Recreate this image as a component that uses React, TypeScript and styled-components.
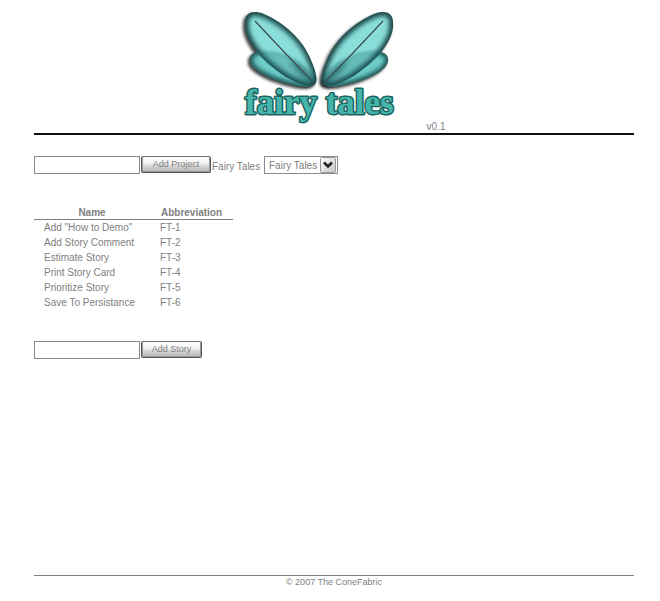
import React from "react";
import styled, { createGlobalStyle } from "styled-components";

const GlobalStyle = createGlobalStyle`
  *, *::before, *::after { box-sizing: border-box; }
  body {
    margin: 0;
    background: #fff;
    color: #808080;
    font: 10px/15px "Liberation Sans", Arial, sans-serif;
  }
`;

const Page = styled.div`
  display: flex;
  flex-direction: column;
  min-height: 100vh;
  padding: 8px 26px 12px 34px;
`;

const Header = styled.header`
  display: flex;
  justify-content: center;
  align-items: flex-end;
  gap: 4px;
  border-bottom: 2px solid #111;
`;

const Logo = styled.svg`
  display: block;
  width: 200px;
  height: 125px;
`;

const Wordmark = styled.text`
  font-family: "Liberation Serif", "Times New Roman", serif;
  font-weight: 700;
  font-size: 35px;
  fill: #45b5ab;
  stroke: #1d655f;
  stroke-width: 3px;
  stroke-linejoin: round;
  paint-order: stroke;
`;

const Version = styled.span`
  line-height: 13px;
`;

const Main = styled.main`
  flex: 1;
  padding-top: 21px;
`;

const Bar = styled.form`
  display: flex;
  align-items: flex-start;
  gap: 1px;
`;

const TextBox = styled.input`
  width: 106px;
  height: 18px;
  padding: 1px 3px;
  border: 1px solid #8a8a8a;
  background: #fff;
  color: inherit;
  font: inherit;
`;

const PushButton = styled.button<{ $wide?: boolean }>`
  min-width: ${(p) => (p.$wide ? 70 : 61)}px;
  height: 17px;
  padding: 0 8px 1px;
  border: 1px solid #555;
  border-top-color: #6e6e6e;
  border-radius: 2px;
  background: linear-gradient(#fff 0%, #f4f4f4 40%, #d6d6d6 60%, #b4b4b4 100%);
  box-shadow: inset 1px 0 #999, inset -1px -1px #999;
  color: #808080;
  font: inherit;
  font-size: 9px;
  line-height: 14px;
`;

const ProjectLabel = styled.label`
  min-width: 51px;
  padding-top: 3px;
`;

const SelectFrame = styled.div`
  display: grid;
  grid-template-columns: 1fr 18px;
  width: 74px;
  height: 18px;
  border: 1px solid #8a8a8a;
  background: #fff;
`;

const ProjectSelect = styled.select`
  grid-area: 1 / 1 / 2 / 3;
  appearance: none;
  width: 100%;
  padding: 0 18px 0 4px;
  border: 0;
  background: transparent;
  color: inherit;
  font: inherit;
`;

const Arrow = styled.svg`
  grid-area: 1 / 2;
  width: 18px;
  height: 16px;
  pointer-events: none;
`;

const StoryTable = styled.table`
  margin: 31px 0;
  border-collapse: collapse;
`;

const Cell = styled.td`
  height: 15px;
  padding: 0 10px;
`;

const HeadCell = styled.th<{ $width: number }>`
  width: ${(p) => p.$width}px;
  padding: 1px 10px 0;
  border-bottom: 1px solid #808080;
  line-height: 13px;
`;

const Footer = styled.footer`
  border-top: 1px solid #808080;
  font-size: 9px;
  line-height: 13px;
  text-align: center;
`;

const BIG = "M22 14 C22 4 31 2 41 6 C62 15 81 33 88 52 C93 63 96 74 91 77 C85 80 68 74 53 62 C34 48 20 29 22 14 Z";
const SMALL = "M27 50 C28 42 44 41 58 45 C75 50 90 63 93 74 C92 80 80 80 69 77 C50 73 24 62 27 50 Z";

function WingPair() {
  return (
    <>
      <g clipPath="url(#small-wing)">
        <path d={SMALL} fill="#6dcdc8" />
        <path d={SMALL} fill="none" stroke="#0a3538" strokeWidth="5" filter="url(#edge)" />
      </g>
      <g clipPath="url(#big-wing)">
        <path d={BIG} fill="#92efea" fillOpacity="0.9" />
        <path d={BIG} fill="none" stroke="#0a3538" strokeWidth="7" filter="url(#edge)" />
        <path d={SMALL} fill="#12686a" fillOpacity="0.35" filter="url(#haze)" />
        <path d="M66 52 Q85 60 94 78 Q78 72 66 52 Z" fill="#08373a" fillOpacity="0.5" filter="url(#edge)" />
      </g>
      <path d="M32 13 L63 46 L92 76" fill="none" stroke="#3b4d53" strokeWidth="1.2" />
    </>
  );
}

function FairyLogo() {
  return (
    <Logo viewBox="0 0 200 125" role="img" aria-label="fairy tales">
      <defs>
        <filter id="edge" x="-20%" y="-20%" width="140%" height="140%">
          <feGaussianBlur stdDeviation="2.8" />
        </filter>
        <filter id="haze">
          <feGaussianBlur stdDeviation="0.8" />
        </filter>
        <filter id="shadow" x="-20%" y="-20%" width="140%" height="140%">
          <feGaussianBlur stdDeviation="1.6" />
        </filter>
        <clipPath id="big-wing"><path d={BIG} /></clipPath>
        <clipPath id="small-wing"><path d={SMALL} /></clipPath>
      </defs>
      <g transform="translate(-2 2)" fill="#000" fillOpacity="0.75" filter="url(#shadow)">
        <path d={BIG} />
        <path d={SMALL} />
        <g transform="translate(192 0) scale(-1 1)">
          <path d={BIG} />
          <path d={SMALL} />
        </g>
      </g>
      <WingPair />
      <g transform="translate(192 0) scale(-1 1)">
        <WingPair />
      </g>
      <Wordmark x="22" y="106">fairy tales</Wordmark>
    </Logo>
  );
}

const stories = [
  ['Add "How to Demo"', "FT-1"],
  ["Add Story Comment", "FT-2"],
  ["Estimate Story", "FT-3"],
  ["Print Story Card", "FT-4"],
  ["Prioritize Story", "FT-5"],
  ["Save To Persistance", "FT-6"],
];

export default function App() {
  const stop = (e: React.FormEvent) => e.preventDefault();
  return (
    <Page>
      <GlobalStyle />
      <Header>
        <FairyLogo />
        <Version>v0.1</Version>
      </Header>
      <Main>
        <Bar onSubmit={stop}>
          <TextBox type="text" aria-label="Project name" />
          <PushButton type="submit" $wide>Add Project</PushButton>
          <ProjectLabel htmlFor="project">Fairy Tales</ProjectLabel>
          <SelectFrame>
            <ProjectSelect id="project">
              <option>Fairy Tales</option>
            </ProjectSelect>
            <Arrow viewBox="0 0 18 16" aria-hidden="true">
              <defs>
                <linearGradient id="arrow-face" x1="0" y1="0" x2="1" y2="1">
                  <stop offset="0" stopColor="#fff" />
                  <stop offset="1" stopColor="#c4c4c4" />
                </linearGradient>
              </defs>
              <rect x="1.5" y="0.5" width="15" height="15" rx="1" fill="url(#arrow-face)" stroke="#999" />
              <path d="M5 5.5 L9 9.5 L13 5.5" fill="none" stroke="#222" strokeWidth="2.6" />
            </Arrow>
          </SelectFrame>
        </Bar>
        <StoryTable>
          <thead>
            <tr>
              <HeadCell scope="col" $width={116}>Name</HeadCell>
              <HeadCell scope="col" $width={83}>Abbreviation</HeadCell>
            </tr>
          </thead>
          <tbody>
            {stories.map(([name, code]) => (
              <tr key={code}>
                <Cell>{name}</Cell>
                <Cell>{code}</Cell>
              </tr>
            ))}
          </tbody>
        </StoryTable>
        <Bar onSubmit={stop}>
          <TextBox type="text" aria-label="Story name" />
          <PushButton type="submit">Add Story</PushButton>
        </Bar>
      </Main>
      <Footer>© 2007 The ConeFabric</Footer>
    </Page>
  );
}
